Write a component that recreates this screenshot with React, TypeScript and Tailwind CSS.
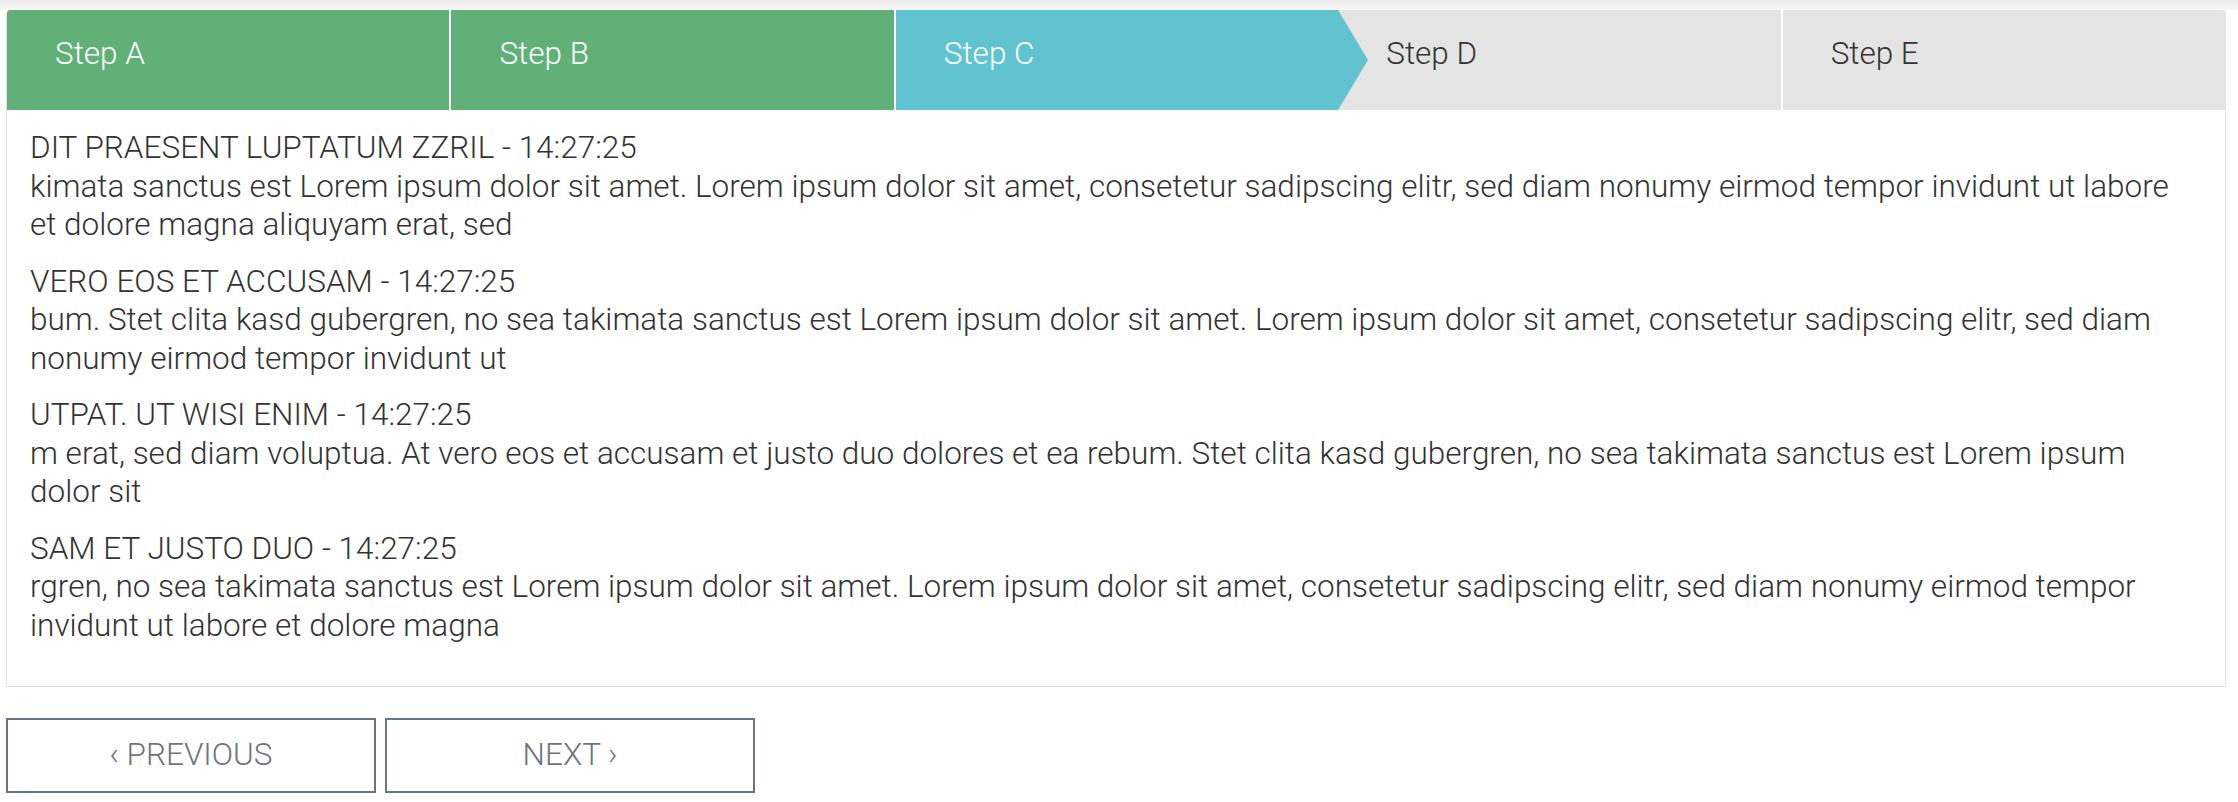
import React from 'react';

const steps = ['Step A', 'Step B', 'Step C', 'Step D', 'Step E'];
const current = 2;

const entries = [
  {
    title: 'DIT PRAESENT LUPTATUM ZZRIL - 14:27:25',
    text: 'kimata sanctus est Lorem ipsum dolor sit amet. Lorem ipsum dolor sit amet, consetetur sadipscing elitr, sed diam nonumy eirmod tempor invidunt ut labore et dolore magna aliquyam erat, sed',
  },
  {
    title: 'VERO EOS ET ACCUSAM - 14:27:25',
    text: 'bum. Stet clita kasd gubergren, no sea takimata sanctus est Lorem ipsum dolor sit amet. Lorem ipsum dolor sit amet, consetetur sadipscing elitr, sed diam nonumy eirmod tempor invidunt ut',
  },
  {
    title: 'UTPAT. UT WISI ENIM - 14:27:25',
    text: 'm erat, sed diam voluptua. At vero eos et accusam et justo duo dolores et ea rebum. Stet clita kasd gubergren, no sea takimata sanctus est Lorem ipsum dolor sit',
  },
  {
    title: 'SAM ET JUSTO DUO - 14:27:25',
    text: 'rgren, no sea takimata sanctus est Lorem ipsum dolor sit amet. Lorem ipsum dolor sit amet, consetetur sadipscing elitr, sed diam nonumy eirmod tempor invidunt ut labore et dolore magna',
  },
];

function StepTab({ label, index }: { label: string; index: number }) {
  const done = index < current;
  const active = index === current;
  const bg = done ? 'bg-[#61b078] text-white' : active ? 'bg-[#62c3d0] text-white' : 'bg-[#e4e4e4] text-[#333]';
  // white divider except right after the active step, where the arrow sits
  const divider = index > 0 && index !== current + 1 ? 'border-l-2 border-white' : '';

  return (
    <div className={`relative flex-1 pt-[25px] pl-[48px] ${bg} ${divider}`}>
      <span>{label}</span>
      {active && (
        <svg
          className="absolute top-0 right-[-30px] z-10 h-full w-[30px]"
          viewBox="0 0 30 100"
          preserveAspectRatio="none"
        >
          <polygon points="0,0 30,50 0,100" fill="#62c3d0" />
        </svg>
      )}
    </div>
  );
}

export default function App() {
  return (
    <div
      className="min-h-screen bg-white text-[31.5px] leading-[38.5px] font-light text-[#333]"
      style={{ fontFamily: 'Roboto, "Liberation Sans", sans-serif' }}
    >
      <div className="h-[10px] bg-gradient-to-b from-[#ededed] to-[#f7f7f7]" />

      <div className="ml-[6px] w-[2220px] overflow-hidden rounded-t-[4px] border border-t-0 border-[#e3e3e3]">
        <div className="flex h-[100px]">
          {steps.map((s, i) => (
            <StepTab key={s} label={s} index={i} />
          ))}
        </div>

        <div className="px-[23px] pt-[19px] pb-[23px]">
          {entries.map((e) => (
            <p key={e.title} className="mb-[18px]">
              {e.title}
              <br />
              {e.text}
            </p>
          ))}
        </div>
      </div>

      <div className="mt-[31px] ml-[6px] flex gap-[9px]">
        <button className="flex h-[75px] w-[370px] items-center justify-center border-2 border-[#6c757d] text-[#6c757d]">
          ‹ PREVIOUS
        </button>
        <button className="flex h-[75px] w-[370px] items-center justify-center border-2 border-[#6c757d] text-[#6c757d]">
          NEXT ›
        </button>
      </div>
    </div>
  );
}
